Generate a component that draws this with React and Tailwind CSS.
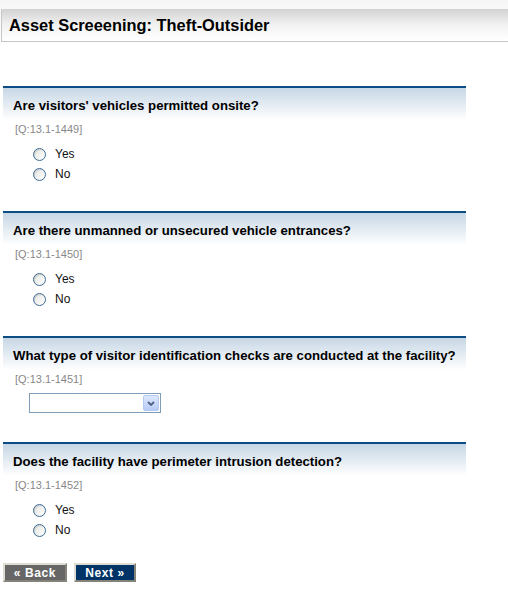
import React from 'react';

const questions = [
  { text: "Are visitors' vehicles permitted onsite?", code: '[Q:13.1-1449]', type: 'radio', mb: 'mb-[27px]' },
  { text: 'Are there unmanned or unsecured vehicle entrances?', code: '[Q:13.1-1450]', type: 'radio', mb: 'mb-[27px]' },
  { text: 'What type of visitor identification checks are conducted at the facility?', code: '[Q:13.1-1451]', type: 'select', mb: 'mb-[29px]' },
  { text: 'Does the facility have perimeter intrusion detection?', code: '[Q:13.1-1452]', type: 'radio', mb: 'mb-[23px]' },
];

const Radio = ({ label }) => (
  <div className="flex items-center h-[20px] ml-[30px]">
    <span className="w-[13px] h-[13px] rounded-full border border-[#3d6c98] bg-gradient-to-br from-[#e4e4e0] to-white shadow-[inset_1px_1px_1px_rgba(0,0,0,0.12)]"></span>
    <span className="ml-[9px] text-[12px] text-[#111]">{label}</span>
  </div>
);

const Question = ({ q }) => (
  <div className={`ml-[3px] w-[463px] ${q.mb}`}>
    <div className="border-t-2 border-[#0d4d86] h-[34px] bg-gradient-to-b from-[#c7d7e5] to-white flex items-center pl-[10px] pt-[3px]">
      <span className="text-[13.2px] font-bold text-black">{q.text}</span>
    </div>
    <div className="mt-[2px] pl-[12px] text-[11px] leading-[14px] text-[#888]">{q.code}</div>
    {q.type === 'radio' ? (
      <div className="mt-[8px]">
        <Radio label="Yes" />
        <Radio label="No" />
      </div>
    ) : (
      <div className="mt-[7px] ml-[26px] w-[132px] h-[20px] border border-[#7f9db9] bg-white flex justify-end items-center pr-[1px]">
        <div className="w-[16px] h-[16px] rounded-[2px] border border-[#b4c8f0] bg-gradient-to-b from-[#dde8fd] to-[#b7cbf7] flex items-center justify-center">
          <svg width="8" height="5" viewBox="0 0 8 5">
            <path d="M1 1 L4 4 L7 1" stroke="#4d6185" strokeWidth="1.8" fill="none" />
          </svg>
        </div>
      </div>
    )}
  </div>
);

export default function App() {
  return (
    <div className="w-[508px] h-[597px] bg-white overflow-hidden" style={{ fontFamily: '"Liberation Sans", Arial, sans-serif' }}>
      <div className="pt-[9px] bg-gradient-to-b from-[#f6f6f6] to-white">
        <div className="ml-[1px] h-[33px] border-l border-b border-[#c6c6c6] bg-gradient-to-b from-[#d2d2d2] via-[#f2f2f2] to-white flex items-center pl-[7px] pt-[1px]">
          <span className="text-[16.4px] font-bold text-black">Asset Screeening: Theft-Outsider</span>
        </div>
      </div>
      <div className="mt-[44px]">
        {questions.map((q) => (
          <Question key={q.code} q={q} />
        ))}
      </div>
      <div className="flex ml-[3px] gap-[7px]">
        <button className="w-[64px] h-[19px] bg-[#666] text-white text-[12px] font-bold tracking-[0.6px] border-2 border-t-[#dedbd2] border-l-[#dedbd2] border-r-[#85827a] border-b-[#85827a] flex items-center justify-center leading-none">
          « Back
        </button>
        <button className="w-[62px] h-[19px] bg-[#003366] text-white text-[12px] font-bold tracking-[0.6px] border-2 border-t-[#dedbd2] border-l-[#dedbd2] border-r-[#85827a] border-b-[#85827a] flex items-center justify-center leading-none">
          Next »
        </button>
      </div>
    </div>
  );
}
